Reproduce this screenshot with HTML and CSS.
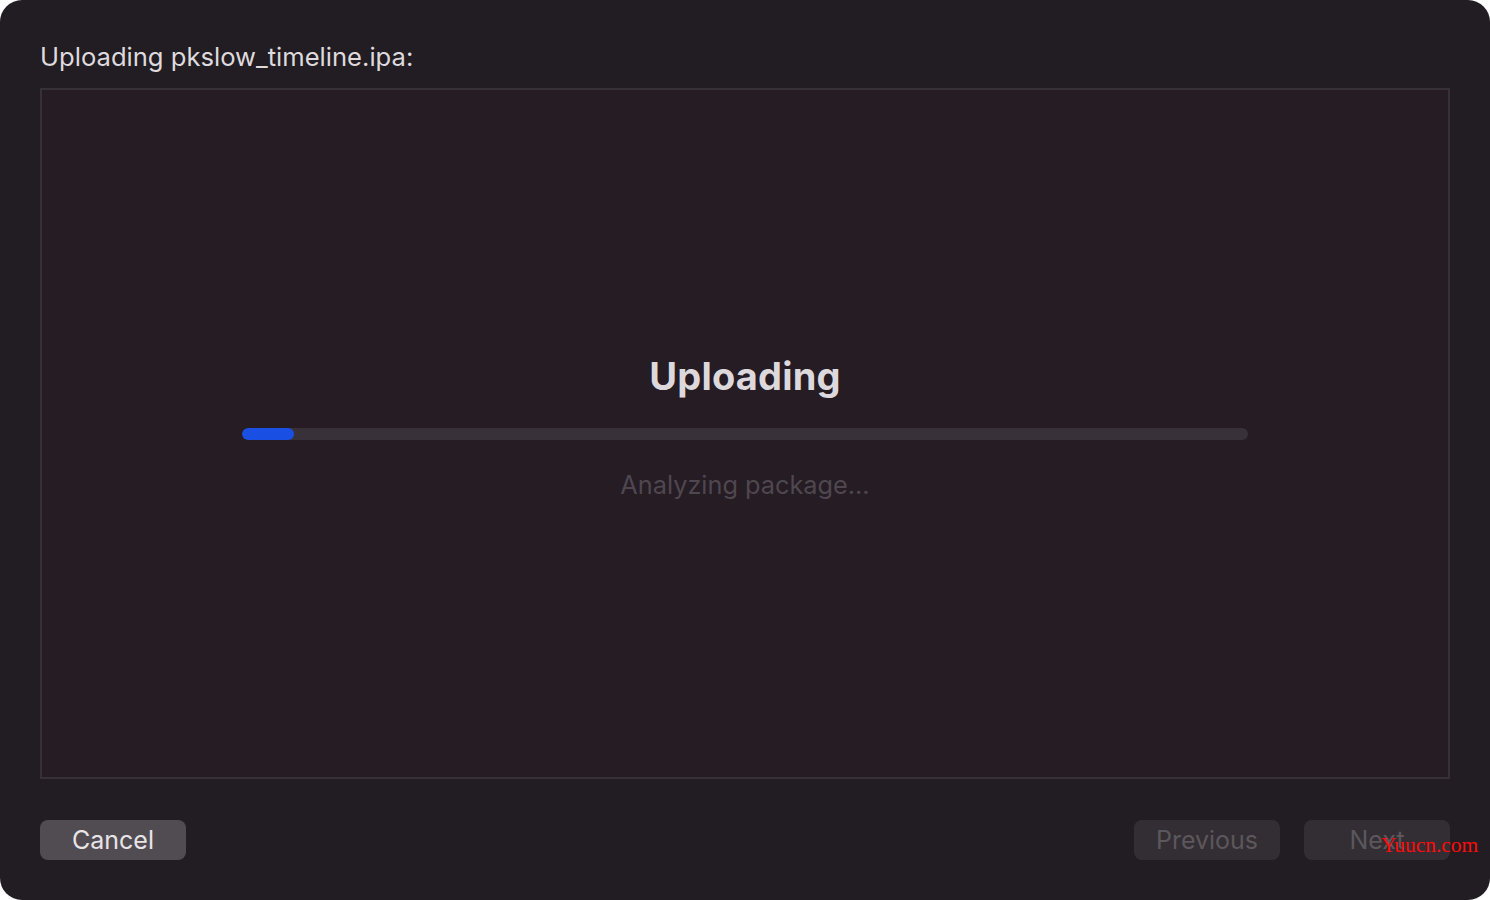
FILE: index.html
```html
<!DOCTYPE html>
<html>
<head>
<meta charset="utf-8">
<link rel="stylesheet" href="styles.css">
</head>
<body>
<div class="window">
  <div class="title">Uploading pkslow_timeline.ipa:</div>
  <div class="panel">
    <div class="status">
      <div class="heading">Uploading</div>
      <div class="track"><div class="fill" style="width:52px"></div></div>
      <div class="sub">Analyzing package...</div>
    </div>
  </div>
  <div class="footer">
    <button class="btn primary">Cancel</button>
    <div class="right">
      <button class="btn disabled">Previous</button>
      <button class="btn disabled">Next</button>
    </div>
  </div>
  <div class="watermark">Yuucn.com</div>
</div>
</body>
</html>
```
FILE: styles.css
```css
html, body {
  margin: 0;
  padding: 0;
  background: #ffffff;
}
.window {
  position: relative;
  width: 1490px;
  height: 900px;
  box-sizing: border-box;
  background: #221d22;
  border-radius: 22px;
  padding: 40px 40px 0 40px;
  display: flex;
  flex-direction: column;
  font-family: Inter, "Noto Sans", sans-serif;
  overflow: hidden;
}
.title {
  color: #dedade;
  font-size: 25.6px;
  line-height: 34px;
  height: 34px;
  margin-bottom: 14px;
  letter-spacing: 0;
}
.panel {
  box-sizing: border-box;
  width: 1410px;
  height: 691px;
  border: 2px solid #363136;
  background: #251c24;
  display: flex;
  align-items: center;
  justify-content: center;
}
.status {
  display: flex;
  flex-direction: column;
  align-items: center;
  margin-bottom: 11px;
}
.heading {
  color: #dcd8dc;
  font-size: 38px;
  font-weight: 700;
  line-height: 44px;
  letter-spacing: 0.2px;
}
.track {
  width: 1006px;
  height: 12px;
  border-radius: 6px;
  background: #393139;
  margin-top: 30px;
  overflow: hidden;
}
.fill {
  height: 12px;
  border-radius: 6px;
  background: #1a4fe3;
}
.sub {
  color: #4f474f;
  font-size: 25.3px;
  line-height: 34px;
  margin-top: 28px;
}
.footer {
  display: flex;
  justify-content: space-between;
  margin-top: 41px;
}
.right {
  display: flex;
  gap: 24px;
}
.btn {
  width: 146px;
  height: 40px;
  border: none;
  border-radius: 8px;
  font-family: Inter, "Noto Sans", sans-serif;
  font-size: 25px;
  padding: 0;
  line-height: 38px;
}
.primary {
  background: #514c51;
  color: #e8e4e8;
}
.disabled {
  background: #332e33;
  color: #5c575c;
}
.watermark {
  position: absolute;
  left: 1381px;
  top: 833px;
  font-family: "Liberation Serif", serif;
  font-size: 21.5px;
  color: #ff0a0a;
}
```
